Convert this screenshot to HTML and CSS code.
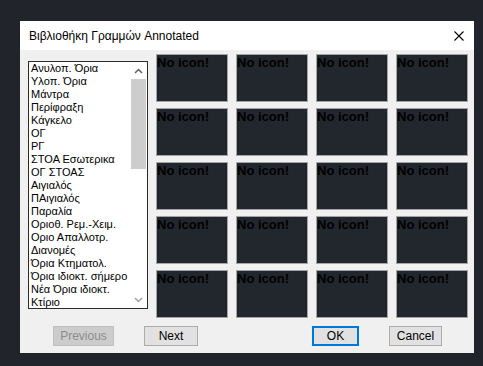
FILE: index.html
```html
<!DOCTYPE html>
<html>
<head>
<meta charset="utf-8">
<link rel="stylesheet" href="styles.css">
</head>
<body>
<div class="dialog">
  <div class="titlebar">
    <span class="title">Βιβλιοθήκη Γραμμών Annotated</span>
    <svg class="close" width="10" height="10" viewBox="0 0 10 10"><path d="M0.5 0.5L9.5 9.5M9.5 0.5L0.5 9.5" stroke="#000" stroke-width="1.1" fill="none"/></svg>
  </div>
  <div class="content">
    <div class="main">
      <div class="listbox">
        <ul class="items">
          <li>Ανυλοπ. Όρια</li>
          <li>Υλοπ. Όρια</li>
          <li>Μάντρα</li>
          <li>Περίφραξη</li>
          <li>Κάγκελο</li>
          <li>ΟΓ</li>
          <li>ΡΓ</li>
          <li>ΣΤΟΑ Εσωτερικα</li>
          <li>ΟΓ ΣΤΟΑΣ</li>
          <li>Αιγιαλός</li>
          <li>ΠΑιγιαλός</li>
          <li>Παραλία</li>
          <li>Οριοθ. Ρεμ.-Χειμ.</li>
          <li>Οριο Απαλλοτρ.</li>
          <li>Διανομές</li>
          <li>Όρια Κτηματολ.</li>
          <li>Όρια ιδιοκτ. σήμερο</li>
          <li>Νέα Όρια ιδιοκτ.</li>
          <li>Κτίριο</li>
        </ul>
        <div class="scrollbar">
          <div class="arrow"><svg width="9" height="6" viewBox="0 0 9 6"><path d="M1 5L4.5 1.5L8 5" stroke="#606060" stroke-width="1.5" fill="none"/></svg></div>
          <div class="thumb"></div>
          <div class="track"></div>
          <div class="arrow"><svg width="9" height="6" viewBox="0 0 9 6"><path d="M1 1L4.5 4.5L8 1" stroke="#a0a0a0" stroke-width="1.5" fill="none"/></svg></div>
        </div>
      </div>
      <div class="grid">
        <div class="tile">No icon!</div><div class="tile">No icon!</div><div class="tile">No icon!</div><div class="tile">No icon!</div>
        <div class="tile">No icon!</div><div class="tile">No icon!</div><div class="tile">No icon!</div><div class="tile">No icon!</div>
        <div class="tile">No icon!</div><div class="tile">No icon!</div><div class="tile">No icon!</div><div class="tile">No icon!</div>
        <div class="tile">No icon!</div><div class="tile">No icon!</div><div class="tile">No icon!</div><div class="tile">No icon!</div>
        <div class="tile">No icon!</div><div class="tile">No icon!</div><div class="tile">No icon!</div><div class="tile">No icon!</div>
      </div>
    </div>
    <div class="buttons">
      <button class="btn prev" disabled>Previous</button>
      <button class="btn next">Next</button>
      <button class="btn ok">OK</button>
      <button class="btn cancel">Cancel</button>
    </div>
  </div>
</div>
</body>
</html>
```

FILE: styles.css
```css
html, body {
  margin: 0;
  padding: 0;
  background: #21252b;
  width: 483px;
  height: 366px;
  overflow: hidden;
}
body {
  padding-top: 21px;
  padding-left: 20px;
  box-sizing: border-box;
  font-family: "Liberation Sans", Arial, sans-serif;
}
.dialog {
  width: 454px;
  height: 332px;
  background: #f0f0f0;
  display: flex;
  flex-direction: column;
}
.titlebar {
  height: 29px;
  background: #ffffff;
  display: flex;
  align-items: center;
  justify-content: space-between;
  padding: 0 10px 0 9px;
  flex: none;
}
.title {
  font-size: 12px;
  color: #000;
  padding-top: 1px;
}
.close {
  display: block;
  margin-top: 1px;
}
.content {
  flex: 1;
  padding: 4px 6px 0 8px;
}
.main {
  display: flex;
  gap: 8px;
}
.listbox {
  margin-top: 7px;
  width: 120px;
  height: 248px;
  box-sizing: border-box;
  border: 1px solid #2b2b2b;
  background: #fff;
  display: flex;
}
.items {
  list-style: none;
  margin: 0;
  padding: 0 0 0 2px;
  flex: 1;
  font-size: 11px;
  line-height: 13px;
  color: #000;
  overflow: hidden;
  white-space: nowrap;
}
.scrollbar {
  width: 17px;
  display: flex;
  flex-direction: column;
  background: #fff;
  flex: none;
}
.arrow {
  height: 17px;
  display: flex;
  align-items: center;
  justify-content: center;
  flex: none;
}
.thumb {
  height: 90px;
  margin: 0 1px;
  background: #cdcdcd;
  flex: none;
}
.track {
  flex: 1;
}
.grid {
  display: grid;
  grid-template-columns: repeat(4, 72px);
  grid-auto-rows: 48px;
  column-gap: 8px;
  row-gap: 6px;
}
.tile {
  background: #22272e;
  border: 1px solid #a3a3a3;
  font-family: "Liberation Sans", Arial, sans-serif;
  font-weight: bold;
  font-size: 13px;
  line-height: 14px;
  color: #000;
  padding-top: 1px;
  overflow: hidden;
  white-space: nowrap;
}
.buttons {
  display: flex;
  padding-top: 8px;
  margin-left: -8px;
}
.btn {
  height: 20px;
  box-sizing: border-box;
  font-family: "Liberation Sans", Arial, sans-serif;
  font-size: 12px;
  background: #e1e1e1;
  border: 1px solid #adadad;
  color: #000;
  padding: 0;
  border-radius: 0;
}
.prev {
  margin-left: 33px;
  width: 61px;
  background: #cccccc;
  border-color: #bfbfbf;
  color: #8d8d8d;
}
.next {
  margin-left: 30px;
  width: 54px;
}
.ok {
  margin-left: 114px;
  width: 47px;
  border: 2px solid #0078d7;
}
.cancel {
  margin-left: 30px;
  width: 53px;
}
```
